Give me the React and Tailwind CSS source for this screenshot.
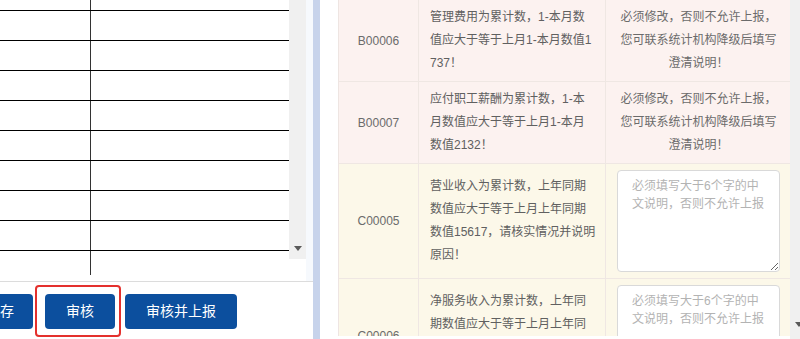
import React from 'react';

const font = { fontFamily: '"Liberation Sans", "Noto Sans CJK SC", sans-serif' };

const leftRows = [11, 30, 30, 30, 30, 30, 30, 30, 30];

const checks = [
  {
    code: 'B00006',
    tone: 'bg-[#fcf2f0]',
    lines: ['管理费用为累计数，1-本月数', '值应大于等于上月1-本月数值1', '737！'],
    note: ['必须修改，否则不允许上报，', '您可联系统计机构降级后填写', '澄清说明！'],
  },
  {
    code: 'B00007',
    tone: 'bg-[#fcf2f0]',
    lines: ['应付职工薪酬为累计数，1-本', '月数值应大于等于上月1-本月', '数值2132！'],
    note: ['必须修改，否则不允许上报，', '您可联系统计机构降级后填写', '澄清说明！'],
  },
  {
    code: 'C00005',
    tone: 'bg-[#fcf8e9]',
    lines: ['营业收入为累计数，上年同期', '数值应大于等于上月上年同期', '数值15617，请核实情况并说明', '原因！'],
  },
  {
    code: 'C00006',
    tone: 'bg-[#fcf8e9]',
    lines: ['净服务收入为累计数，上年同', '期数值应大于等于上月上年同', '期数值3245，请核实情况并说', '明原因！'],
  },
];

function DownArrow({ className }) {
  return (
    <svg width="8" height="5" viewBox="0 0 8 5" className={className}>
      <path d="M0 0 L8 0 L4 5 Z" fill="#5a5a5a" />
    </svg>
  );
}

export default function App() {
  return (
    <div className="flex w-[800px] h-[339px] overflow-hidden bg-white" style={font}>
      {/* Left form panel */}
      <div className="relative w-[313px] flex flex-col">
        <div className="flex h-[282px] border-b border-[#dcdcdc]">
          <div className="w-[289px] h-[275px] overflow-hidden flex flex-col">
            {leftRows.map((h, i) => (
              <div key={i} className="flex shrink-0 border-b border-black" style={{ height: h }}>
                <div className="w-[91px] border-r border-[#333]" />
                <div className="flex-1" />
              </div>
            ))}
            <div className="flex flex-1">
              <div className="w-[91px] border-r border-[#333]" />
              <div className="flex-1" />
            </div>
          </div>
          <div className="w-[17px] h-[259px] bg-[#f0f0f0] flex flex-col justify-end items-center pb-[8px]">
            <DownArrow />
          </div>
          <div className="flex-1 bg-[#f6f9fd]" />
        </div>

        <div className="flex items-start pt-[12px]">
          <button className="ml-[-33px] w-[66px] h-[35px] rounded-[4px] bg-[#0c4f9e] text-white text-[14px]">
            保存
          </button>
          <button className="ml-[12px] w-[70px] h-[35px] rounded-[4px] bg-[#0c4f9e] text-white text-[14px]">
            审核
          </button>
          <button className="ml-[10px] w-[112px] h-[35px] rounded-[4px] bg-[#0c4f9e] text-white text-[14px]">
            审核并上报
          </button>
        </div>

        {/* annotation highlight */}
        <div className="absolute left-[35px] top-[285px] w-[86px] h-[52px] border-2 border-[#e4302d] rounded-[4px]" />
      </div>

      {/* splitter */}
      <div className="w-[7px] bg-[#c7d3eb]" />
      <div className="w-[18px]" />

      {/* Right check results */}
      <div className="w-[452px] h-[336px] overflow-hidden border-l border-[#eee5e2]">
        {checks.map((c) => (
          <div key={c.code} className={`flex border-b border-[#efe7e3] ${c.tone}`}>
            <div className="w-[80px] shrink-0 flex items-center justify-center border-r border-[#efe7e3] text-[12px] text-[#6b6b6b]">
              {c.code}
            </div>
            <div className="w-[187px] shrink-0 px-[11px] py-[6px] flex items-center border-r border-[#efe7e3] text-[12px] leading-[23px] text-[#606060] whitespace-nowrap">
              <div>
                {c.lines.map((l) => (
                  <div key={l}>{l}</div>
                ))}
              </div>
            </div>
            <div className="w-[184px] shrink-0 flex items-center justify-center pl-[11px] pr-[10px] py-[6px]">
              {c.note ? (
                <div className="text-center text-[12px] leading-[23px] text-[#6b6b6b] whitespace-nowrap">
                  {c.note.map((l) => (
                    <div key={l}>{l}</div>
                  ))}
                </div>
              ) : (
                <textarea
                  className="w-[163px] h-[102px] bg-white border border-[#d9d9d9] rounded-[4px] pl-[14px] pr-[10px] py-[6px] text-[12px] leading-[18px] text-[#555] placeholder:text-[#b3b3b3] outline-none"
                  placeholder={'必须填写大于6个字的中\n文说明，否则不允许上报'}
                />
              )}
            </div>
          </div>
        ))}
      </div>

      {/* right scrollbar */}
      <div className="w-[10px] h-[339px] bg-[#f0f0f0] flex flex-col justify-end items-end pb-[12px]">
        <DownArrow className="mr-[-3px]" />
      </div>
    </div>
  );
}
